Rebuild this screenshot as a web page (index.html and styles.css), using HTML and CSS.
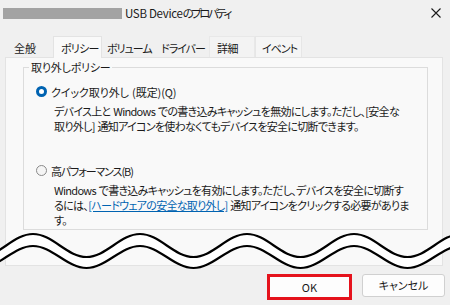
FILE: index.html
```html
<!DOCTYPE html>
<html lang="ja">
<head>
    <meta charset="UTF-8">
    <title>USB Deviceのプロパティ</title>
    <link rel="stylesheet" href="styles.css">
</head>
<body>
    <div class="window">
        <div class="titlebar">
            <span class="masked"></span>
            <span class="title">USB Device<span class="title-kana">のプロパティ</span></span>
            <span class="close">
                <svg width="10" height="10" viewBox="0 0 10 10"><path d="M0.5 0.5 L9.5 9.5 M9.5 0.5 L0.5 9.5" stroke="#1a1a1a" stroke-width="1.1" fill="none"/></svg>
            </span>
        </div>

        <div class="tabs">
            <div class="tab tab-general">全般</div>
            <div class="tab tab-policy active">ポリシー</div>
            <div class="tab tab-volume">ボリューム</div>
            <div class="tab tab-driver">ドライバー</div>
            <div class="tab tab-details">詳細</div>
            <div class="tab tab-events">イベント</div>
        </div>

        <div class="panel">
            <fieldset class="group">
                <legend>取り外しポリシー</legend>

                <div class="option">
                    <span class="radio checked"></span>
                    <span class="option-label quick">クイック取り外し (既定)(Q)</span>
                </div>
                <p class="desc">デバイス上と Windows での書き込みキャッシュを無効にします。ただし、[安全な<br>取り外し] 通知アイコンを使わなくてもデバイスを安全に切断できます。</p>

                <div class="option second">
                    <span class="radio"></span>
                    <span class="option-label">高パフォーマンス(B)</span>
                </div>
                <p class="desc">Windows で書き込みキャッシュを有効にします。ただし、デバイスを安全に切断す<br>るには、<a href="#" class="link">[ハードウェアの安全な取り外し]</a> 通知アイコンをクリックする必要がありま<br>す。</p>
            </fieldset>
        </div>

        <div class="buttons">
            <div class="btn ok">OK</div>
            <div class="btn">キャンセル</div>
        </div>

        <!-- 省略を示す波線 -->
        <svg class="wave" width="450" height="60" viewBox="0 225 450 60">
            <path class="wave-fill" d="M-74 240 c19.5 0 34 23 53.5 23 s34 -23 53.5 -23 s34 23 53.5 23 s34 -23 53.5 -23 s34 23 53.5 23 s34 -23 53.5 -23 s34 23 53.5 23 s34 -23 53.5 -23 s34 23 53.5 23 s34 -23 53.5 -23 s34 23 53.5 23 s34 -23 53.5 -23"/>
            <path class="wave-line" d="M-74 234 c19.5 0 34 23 53.5 23 s34 -23 53.5 -23 s34 23 53.5 23 s34 -23 53.5 -23 s34 23 53.5 23 s34 -23 53.5 -23 s34 23 53.5 23 s34 -23 53.5 -23 s34 23 53.5 23 s34 -23 53.5 -23 s34 23 53.5 23 s34 -23 53.5 -23"/>
            <path class="wave-line" d="M-74 246 c19.5 0 34 22 53.5 22 s34 -22 53.5 -22 s34 22 53.5 22 s34 -22 53.5 -22 s34 22 53.5 22 s34 -22 53.5 -22 s34 22 53.5 22 s34 -22 53.5 -22 s34 22 53.5 22 s34 -22 53.5 -22 s34 22 53.5 22 s34 -22 53.5 -22"/>
        </svg>
    </div>
</body>
</html>
```

FILE: styles.css
```css
body {
    margin: 0;
    padding: 0;
    background: #f0f0f0;
    font-family: "Noto Sans CJK JP", "Noto Sans", sans-serif;
    font-size: 11px;
    color: #1a1a1a;
    font-feature-settings: "palt";
}
.window {
    position: relative;
    width: 450px;
    height: 305px;
    overflow: hidden;
}
.titlebar {
    height: 26px;
    display: flex;
    align-items: center;
}
.masked {
    width: 119px;
    height: 11px;
    margin-left: 3px;
    background: #a3a3a3;
}
.title {
    margin-left: 3px;
    line-height: 15px;
    font-size: 11.5px;
    letter-spacing: -0.3px;
}
.title-kana {
    letter-spacing: -2.5px;
}
.close {
    margin-left: auto;
    margin-right: 9px;
    display: flex;
}
.tabs {
    display: flex;
    margin-top: 10px;
    padding-left: 8px;
    height: 21px;
}
.tab {
    box-sizing: border-box;
    line-height: 22px;
    white-space: nowrap;
    border: 1px solid transparent;
    border-bottom: none;
    letter-spacing: -1px;
}
.tab-general { width: 45px; padding-left: 5px; letter-spacing: 0; }
.tab-policy { width: 49px; padding-left: 7px; letter-spacing: -0.7px; }
.tab-volume { width: 54px; padding-left: 4px; }
.tab-driver { width: 53px; padding-left: 4px; }
.tab-details { width: 46px; padding-left: 7px; letter-spacing: -0.5px; border-color: #e8e8e8; background: #f3f3f3; }
.tab-events { width: 47px; padding-left: 6px; border-color: #e6e6e6; background: #f5f5f5; }
.tab.active {
    background: #f9f9f9;
    border-color: #e3e3e3;
    height: 22px;
    position: relative;
    z-index: 1;
}
.panel {
    margin: 0 7px 0 5px;
    height: 207px;
    background: #f9f9f9;
    border: 1px solid #e3e3e3;
}
.group {
    margin: 2px 14px 0 17px;
    padding: 0 10px 0 12px;
    height: 168px;
    border: 1px solid #dcdcdc;
}
.group legend {
    margin-left: -7px;
    padding: 0 2px;
    line-height: 15px;
    letter-spacing: -0.2px;
}
.option {
    display: flex;
    align-items: center;
    height: 15px;
    margin-top: 9px;
    letter-spacing: -1.1px;
}
.option .quick {
    letter-spacing: -0.1px;
    word-spacing: 1px;
}
.option.second {
    margin-top: 29px;
}
.radio {
    width: 11px;
    height: 11px;
    box-sizing: border-box;
    border-radius: 50%;
    border: 1px solid #8a8a8a;
    background: #f5f5f5;
    margin-right: 4px;
}
.radio.checked {
    border: 3.5px solid #0063b1;
    background: #ffffff;
}
.desc {
    margin: 5px 0 0 18px;
    line-height: 15px;
    white-space: nowrap;
    letter-spacing: -0.7px;
    word-spacing: 1px;
}
.link {
    color: #0063b1;
    text-decoration: underline;
}
.buttons {
    display: flex;
    justify-content: flex-end;
    align-items: flex-start;
    gap: 10px;
    margin-top: 8px;
    padding-right: 5px;
}
.btn {
    width: 81px;
    height: 21px;
    line-height: 21px;
    text-align: center;
    background: #fdfdfd;
    border: 1px solid #d0d0d0;
    border-radius: 3px;
}
.btn.ok {
    width: 79px;
    height: 20px;
    line-height: 20px;
    border: 3px solid #e5121c;
    border-radius: 0;
    background: #fdfdfd;
}
.wave {
    position: absolute;
    left: 0;
    top: 225px;
}
.wave-fill {
    fill: none;
    stroke: #ffffff;
    stroke-width: 12;
}
.wave-line {
    fill: none;
    stroke: #000000;
    stroke-width: 2.2;
}
```
